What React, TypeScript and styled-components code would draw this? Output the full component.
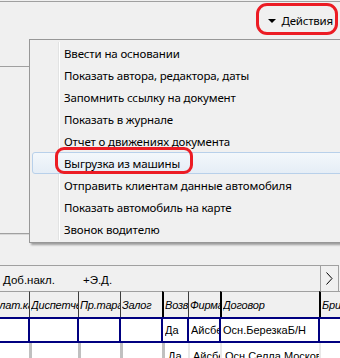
import styled, { createGlobalStyle, css } from "styled-components";

const GlobalStyle = createGlobalStyle`
  html, body { margin: 0; padding: 0; background: #f0f0f0; }
  #root { width: 340px; height: 358px; overflow: hidden; }
`;

const uiFont = `"Noto Sans", "Open Sans", sans-serif`;
const gridFont = `"Liberation Sans", Arial, sans-serif`;

const Window = styled.div`
  position: relative;
  width: 340px;
  height: 358px;
  padding-top: 1px;
  box-sizing: border-box;
  overflow: hidden;
  background: #f0f0f0;
  font-family: ${uiFont};
  color: #000;
`;

const TopBar = styled.div`
  display: flex;
  justify-content: flex-end;
  align-items: flex-start;
  height: 36px;
  box-sizing: border-box;
  border-top: 1px solid #a0a0a0;
  padding: 1px 2px 0 0;
`;

const ActionButton = styled.div`
  display: flex;
  align-items: center;
  justify-content: flex-end;
  gap: 5px;
  width: 82px;
  height: 32px;
  box-sizing: border-box;
  border: 3px solid #ec1c24;
  border-radius: 11px;
  padding: 3px 2px 0 0;
  font-size: 11.5px;
  letter-spacing: -0.2px;
`;

const DownArrow = styled.span`
  width: 0;
  height: 0;
  border-left: 4px solid transparent;
  border-right: 4px solid transparent;
  border-top: 4px solid #000;
`;

const FormPanel = styled.div`
  margin-top: 29px;
  height: 168px;
  box-sizing: border-box;
  border-top: 1px solid #a0a0a0;
  border-bottom: 1px solid #a0a0a0;
  box-shadow: 0 1px 0 #d8d8d8;
`;

const TabBar = styled.div`
  display: flex;
  width: 339px;
  height: 26px;
  margin-top: 31px;
  box-sizing: border-box;
  border-top: 1px solid #a0a0a0;
  border-right: 1px solid #a0a0a0;
  font-family: ${gridFont};
  font-size: 11.5px;
`;

const Tabs = styled.div`
  flex: 1;
  display: flex;
  align-items: center;
  gap: 28px;
  padding: 2px 0 0 3px;
  border-right: 1px solid #a0a0a0;
`;

const ScrollButton = styled.div`
  width: 17px;
  display: flex;
  align-items: center;
  justify-content: center;
`;

const Grid = styled.div`
  display: grid;
  grid-template-columns: 45px 49px 42px 42px 26px 32px 99px 60px;
  margin-left: -16px;
  width: 395px;
  font-family: ${gridFont};
  font-size: 11px;
`;

type Sep = "thin" | "thick";

const HeadCell = styled.div<{ $sep?: Sep }>`
  height: 26px;
  box-sizing: border-box;
  display: flex;
  align-items: center;
  min-width: 0;
  padding: 1px 0 0 1px;
  font-style: italic;
  letter-spacing: -0.2px;
  background: #f0f0f0;
  border-top: 1px solid #a0a0a0;
  ${(p) =>
    p.$sep === "thick"
      ? css`border-left: 2px solid #000;`
      : p.$sep === "thin"
      ? css`border-left: 1px solid #3c3c3c;`
      : ""}
`;

const Clip = styled.span`
  display: block;
  min-width: 0;
  white-space: nowrap;
  overflow: hidden;
`;

const SelCell = styled.div`
  height: 26px;
  box-sizing: border-box;
  display: flex;
  align-items: center;
  min-width: 0;
  padding-left: 2px;
  background: #fff;
  border-style: solid;
  border-color: #000080;
  border-width: 2px 1px 2px 1px;
`;

const Cell = styled.div<{ $heavy?: boolean }>`
  height: 26px;
  box-sizing: border-box;
  display: flex;
  align-items: center;
  min-width: 0;
  padding-left: 3px;
  background: #fff;
  border-left: ${(p) => (p.$heavy ? "3px solid #c0c0c0" : "2px solid #e8e8e8")};
`;

const Menu = styled.div`
  position: absolute;
  left: 29px;
  top: 39px;
  width: 340px;
  box-sizing: border-box;
  padding: 2px;
  border: 1px solid #979797;
  background: #f0f0f0;
  box-shadow: 2px 2px 2px rgba(0, 0, 0, 0.35);
  font-size: 11.5px;
  letter-spacing: -0.15px;

  &::before {
    content: "";
    position: absolute;
    left: 28px;
    top: 2px;
    bottom: 2px;
    width: 1px;
    background: #e2e3e3;
    box-shadow: 1px 0 0 #fff;
  }
`;

const MenuItem = styled.div<{ $hot?: boolean }>`
  position: relative;
  height: 22px;
  box-sizing: border-box;
  display: flex;
  align-items: center;
  padding-left: 31px;
  border: 1px solid transparent;
  border-radius: 3px;
  white-space: nowrap;
  ${(p) =>
    p.$hot &&
    css`
      border-color: #b8d0ea;
      background: linear-gradient(#f3f7fb, #e5edf6);
    `}
`;

const RedMark = styled.span`
  position: absolute;
  left: 22px;
  top: -6px;
  width: 138px;
  height: 27px;
  box-sizing: border-box;
  border: 3px solid #ec1c24;
  border-radius: 9px;
`;

const menuItems = [
  "Ввести на основании",
  "Показать автора, редактора, даты",
  "Запомнить ссылку на документ",
  "Показать в журнале",
  "Отчет о движениях документа",
  "Выгрузка из машины",
  "Отправить клиентам данные автомобиля",
  "Показать автомобиль на карте",
  "Звонок водителю",
];

const headers: { title: string; sep?: Sep }[] = [
  { title: "Оплат.карт" },
  { title: "Диспетчер", sep: "thin" },
  { title: "Пр.тара", sep: "thin" },
  { title: "Залог", sep: "thin" },
  { title: "Возврат", sep: "thick" },
  { title: "Фирма", sep: "thin" },
  { title: "Договор", sep: "thick" },
  { title: "Бригада", sep: "thick" },
];

const rows = [
  ["", "", "", "", "Да", "Айсберг", "Осн.БерезкаБ/Н", ""],
  ["", "", "", "", "Да", "Айсберг", "Осн.Селла Московская", ""],
];

export default function App() {
  return (
    <Window>
      <GlobalStyle />
      <TopBar>
        <ActionButton>
          <DownArrow />
          <span>Действия</span>
        </ActionButton>
      </TopBar>
      <FormPanel />
      <TabBar>
        <Tabs>
          <span>Доб.накл.</span>
          <span>+Э.Д.</span>
        </Tabs>
        <ScrollButton>
          <svg width="7" height="13" viewBox="0 0 7 13">
            <polyline points="0.5,0.5 6,6.5 0.5,12.5" fill="none" stroke="#000" strokeWidth="1" />
          </svg>
        </ScrollButton>
      </TabBar>
      <Grid>
        {headers.map((h) => (
          <HeadCell key={h.title} $sep={h.sep}>
            <Clip>{h.title}</Clip>
          </HeadCell>
        ))}
        {rows[0].map((v, i) => (
          <SelCell key={"a" + i}>
            <Clip>{v}</Clip>
          </SelCell>
        ))}
        {rows[1].map((v, i) => (
          <Cell key={"b" + i} $heavy={i > 0 && i < 5}>
            <Clip>{v}</Clip>
          </Cell>
        ))}
      </Grid>
      <Menu>
        {menuItems.map((m) => (
          <MenuItem key={m} $hot={m === "Выгрузка из машины"}>
            {m}
            {m === "Выгрузка из машины" && <RedMark />}
          </MenuItem>
        ))}
      </Menu>
    </Window>
  );
}
